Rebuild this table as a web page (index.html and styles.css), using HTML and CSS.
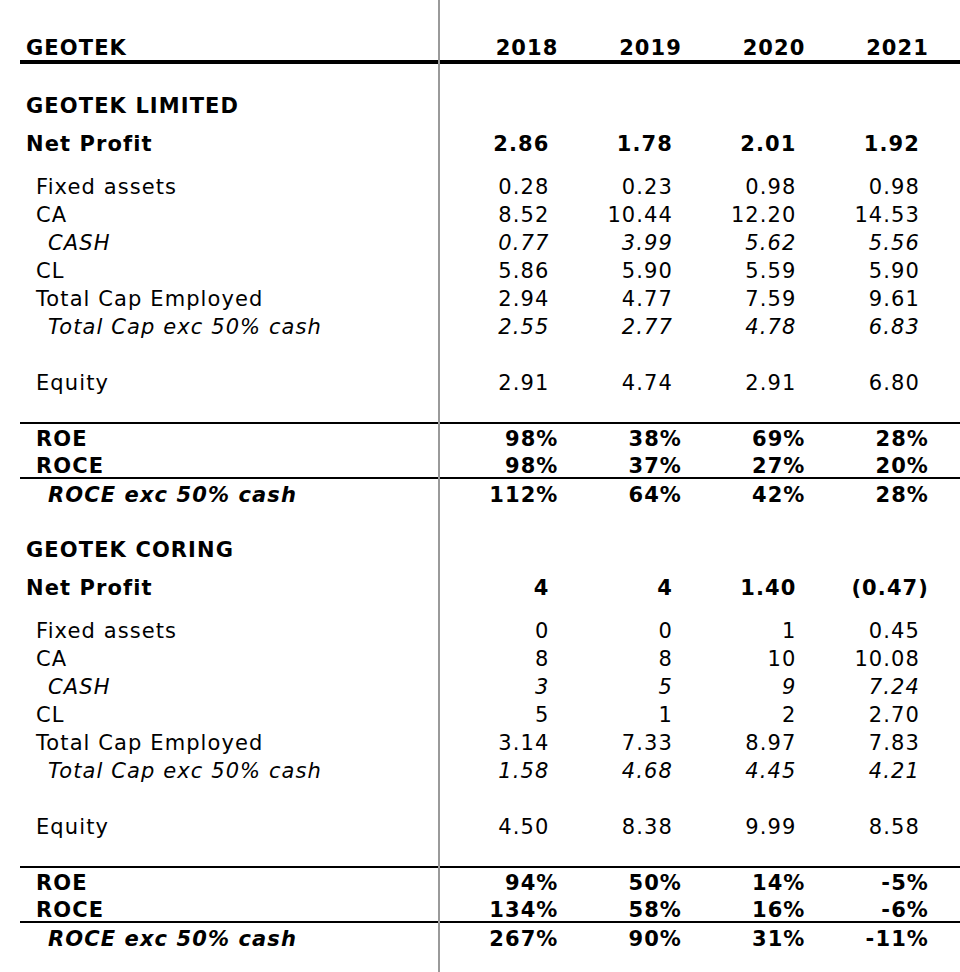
FILE: index.html
```html
<!DOCTYPE html>
<html lang="en">
<head>
<meta charset="utf-8">
<title>GEOTEK</title>
<link rel="stylesheet" href="styles.css">
</head>
<body>
<div class="sheet">
  <div class="row head">
    <div class="lab l0">GEOTEK</div>
    <div class="c">2018</div><div class="c">2019</div><div class="c">2020</div><div class="c">2021</div>
  </div>

  <section class="block">
    <div class="row title"><div class="lab l0">GEOTEK LIMITED</div></div>
    <div class="row profit">
      <div class="lab l0">Net Profit</div>
      <div class="c n">2.86</div><div class="c n">1.78</div><div class="c n">2.01</div><div class="c n">1.92</div>
    </div>
    <div class="items">
      <div class="row"><div class="lab l1">Fixed assets</div><div class="c n">0.28</div><div class="c n">0.23</div><div class="c n">0.98</div><div class="c n">0.98</div></div>
      <div class="row"><div class="lab l1">CA</div><div class="c n">8.52</div><div class="c n">10.44</div><div class="c n">12.20</div><div class="c n">14.53</div></div>
      <div class="row it"><div class="lab l2">CASH</div><div class="c n">0.77</div><div class="c n">3.99</div><div class="c n">5.62</div><div class="c n">5.56</div></div>
      <div class="row"><div class="lab l1">CL</div><div class="c n">5.86</div><div class="c n">5.90</div><div class="c n">5.59</div><div class="c n">5.90</div></div>
      <div class="row"><div class="lab l1">Total Cap Employed</div><div class="c n">2.94</div><div class="c n">4.77</div><div class="c n">7.59</div><div class="c n">9.61</div></div>
      <div class="row it"><div class="lab l2">Total Cap exc 50% cash</div><div class="c n">2.55</div><div class="c n">2.77</div><div class="c n">4.78</div><div class="c n">6.83</div></div>
      <div class="row"></div>
      <div class="row"><div class="lab l1">Equity</div><div class="c n">2.91</div><div class="c n">4.74</div><div class="c n">2.91</div><div class="c n">6.80</div></div>
    </div>
    <div class="ratios">
      <div class="row roe"><div class="lab l1">ROE</div><div class="c">98%</div><div class="c">38%</div><div class="c">69%</div><div class="c">28%</div></div>
      <div class="row roce"><div class="lab l1">ROCE</div><div class="c">98%</div><div class="c">37%</div><div class="c">27%</div><div class="c">20%</div></div>
      <div class="row rocex"><div class="lab l2 em">ROCE exc 50% cash</div><div class="c">112%</div><div class="c">64%</div><div class="c">42%</div><div class="c">28%</div></div>
    </div>
  </section>

  <section class="block">
    <div class="row title"><div class="lab l0">GEOTEK CORING</div></div>
    <div class="row profit">
      <div class="lab l0">Net Profit</div>
      <div class="c n">4</div><div class="c n">4</div><div class="c n">1.40</div><div class="c">(0.47)</div>
    </div>
    <div class="items">
      <div class="row"><div class="lab l1">Fixed assets</div><div class="c n">0</div><div class="c n">0</div><div class="c n">1</div><div class="c n">0.45</div></div>
      <div class="row"><div class="lab l1">CA</div><div class="c n">8</div><div class="c n">8</div><div class="c n">10</div><div class="c n">10.08</div></div>
      <div class="row it"><div class="lab l2">CASH</div><div class="c n">3</div><div class="c n">5</div><div class="c n">9</div><div class="c n">7.24</div></div>
      <div class="row"><div class="lab l1">CL</div><div class="c n">5</div><div class="c n">1</div><div class="c n">2</div><div class="c n">2.70</div></div>
      <div class="row"><div class="lab l1">Total Cap Employed</div><div class="c n">3.14</div><div class="c n">7.33</div><div class="c n">8.97</div><div class="c n">7.83</div></div>
      <div class="row it"><div class="lab l2">Total Cap exc 50% cash</div><div class="c n">1.58</div><div class="c n">4.68</div><div class="c n">4.45</div><div class="c n">4.21</div></div>
      <div class="row"></div>
      <div class="row"><div class="lab l1">Equity</div><div class="c n">4.50</div><div class="c n">8.38</div><div class="c n">9.99</div><div class="c n">8.58</div></div>
    </div>
    <div class="ratios">
      <div class="row roe"><div class="lab l1">ROE</div><div class="c">94%</div><div class="c">50%</div><div class="c">14%</div><div class="c">-5%</div></div>
      <div class="row roce"><div class="lab l1">ROCE</div><div class="c">134%</div><div class="c">58%</div><div class="c">16%</div><div class="c">-6%</div></div>
      <div class="row rocex"><div class="lab l2 em">ROCE exc 50% cash</div><div class="c">267%</div><div class="c">90%</div><div class="c">31%</div><div class="c">-11%</div></div>
    </div>
  </section>
</div>
</body>
</html>
```

FILE: styles.css
```css
html {
  height: 100%;
}

body {
  position: relative;
  margin: 0;
  min-height: 100%;
  color: #000;
  background: #fff;
}

/* spreadsheet column divider, drawn over the horizontal rules */
body::after {
  content: "";
  position: absolute;
  top: 0;
  bottom: 0;
  left: 438px;
  width: 2px;
  background: #9a9a9a;
}

.sheet {
  margin-left: 20px;
  font-family: "DejaVu Sans", Verdana, sans-serif;
  font-size: 21px;
  letter-spacing: 1.1px;
}

.row {
  display: grid;
  grid-template-columns: 418px repeat(4, 123.5px) 1fr;
  height: 28px;
  line-height: 28px;
  white-space: nowrap;
}

.lab.l0 { padding-left: 6px; }
.lab.l1 { padding-left: 16px; }
.lab.l2 { padding-left: 28px; }

.c {
  text-align: right;
  padding-right: 3px;
}

.c.n {
  padding-right: 12px;
}

.head {
  margin-top: 37px;
  margin-bottom: 28px;
  height: 23px;
  line-height: 23px;
  font-weight: bold;
  border-bottom: 4px solid #000;
}

.block {
  margin-top: 25px;
}

.title {
  font-weight: bold;
}

.profit {
  margin-top: 10px;
  font-weight: bold;
}

.items {
  margin-top: 15px;
}

.it {
  font-style: italic;
}

.ratios {
  margin-top: 25px;
  border-top: 2px solid #000;
  font-weight: bold;
}

.roe {
  height: 31px;
  line-height: 31px;
}

.roce {
  height: 22px;
  line-height: 22px;
}

.rocex {
  height: 32px;
  line-height: 32px;
  border-top: 2px solid #000;
}

.em {
  font-style: italic;
}
```
